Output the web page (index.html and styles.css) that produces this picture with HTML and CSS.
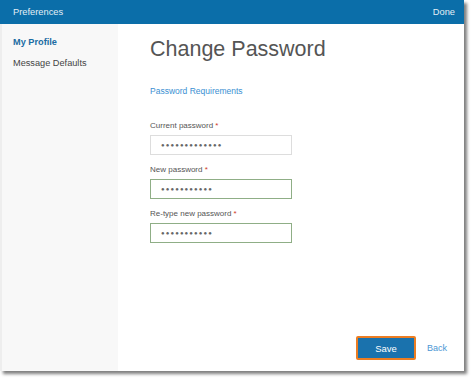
FILE: index.html
```html
<!DOCTYPE html>
<html lang="en">
<head>
  <meta charset="UTF-8" />
  <title>Preferences</title>
  <link rel="stylesheet" href="styles.css">
</head>
<body>
  <div class="window">
    <div class="topbar">
      <span class="topbar-title">Preferences</span>
      <span class="topbar-done">Done</span>
    </div>
    <div class="main">
      <div class="sidebar">
        <div class="side-item active">My Profile</div>
        <div class="side-item">Message Defaults</div>
      </div>
      <div class="content">
        <h1>Change Password</h1>
        <a class="req-link">Password Requirements</a>
        <div class="field">
          <label>Current password <span class="star">*</span></label>
          <div class="input">&#9679;&#9679;&#9679;&#9679;&#9679;&#9679;&#9679;&#9679;&#9679;&#9679;&#9679;&#9679;&#9679;</div>
        </div>
        <div class="field">
          <label>New password <span class="star">*</span></label>
          <div class="input valid">&#9679;&#9679;&#9679;&#9679;&#9679;&#9679;&#9679;&#9679;&#9679;&#9679;&#9679;</div>
        </div>
        <div class="field">
          <label>Re-type new password <span class="star">*</span></label>
          <div class="input valid">&#9679;&#9679;&#9679;&#9679;&#9679;&#9679;&#9679;&#9679;&#9679;&#9679;&#9679;</div>
        </div>
        <div class="actions">
          <button class="save">Save</button>
          <a class="back">Back</a>
        </div>
      </div>
    </div>
  </div>
</body>
</html>
```

FILE: styles.css
```css
* {
  box-sizing: border-box;
  margin: 0;
  padding: 0;
}

body {
  font-family: 'Liberation Sans', Arial, sans-serif;
  background: #fff;
  width: 474px;
  height: 380px;
  overflow: hidden;
}

.window {
  width: 464px;
  height: 371px;
  display: flex;
  flex-direction: column;
  background: #fff;
  box-shadow: 3px 3px 3px rgba(0, 0, 0, 0.5);
}

.topbar {
  height: 24px;
  background: #0b6ea9;
  display: flex;
  justify-content: space-between;
  align-items: center;
  padding: 0 9px 0 13px;
  font-size: 9.3px;
  color: #e4eef6;
}

.main {
  flex: 1;
  display: flex;
}

.sidebar {
  width: 118px;
  background: #f8f8f8;
  padding: 13px 0 0 11px;
  border-left: 2px solid #eee;
}

.side-item {
  font-size: 9.2px;
  color: #444;
  margin-bottom: 11px;
}

.side-item.active {
  color: #1b6ca3;
  font-weight: bold;
}

.content {
  flex: 1;
  display: flex;
  flex-direction: column;
  padding: 12px 0 0 32px;
}

h1 {
  font-size: 21.5px;
  font-weight: normal;
  color: #555;
  line-height: 26px;
}

.req-link {
  font-size: 8.5px;
  color: #3a8fd2;
  margin-top: 24px;
  margin-bottom: 25px;
}

.field {
  display: flex;
  flex-direction: column;
  margin-bottom: 10px;
}

.field label {
  font-size: 8px;
  color: #555;
  margin-bottom: 5px;
}

.star {
  color: #d03a2a;
}

.input {
  width: 142px;
  height: 20px;
  border: 1px solid #ddd;
  padding: 0 0 0 10px;
  font-size: 6px;
  letter-spacing: 1.1px;
  color: #666;
  display: flex;
  align-items: center;
}

.input.valid {
  border-color: #8fae86;
}

.actions {
  margin-top: auto;
  margin-bottom: 11px;
  display: flex;
  align-items: center;
  justify-content: flex-end;
  padding-right: 17px;
  gap: 11px;
}

.save {
  width: 60px;
  height: 24px;
  background: #1a72ad;
  border: 2px solid #ec7d22;
  border-radius: 2px;
  color: #fff;
  font-family: inherit;
  font-size: 9.5px;
}

.back {
  font-size: 9px;
  color: #4c97d4;
}
```
